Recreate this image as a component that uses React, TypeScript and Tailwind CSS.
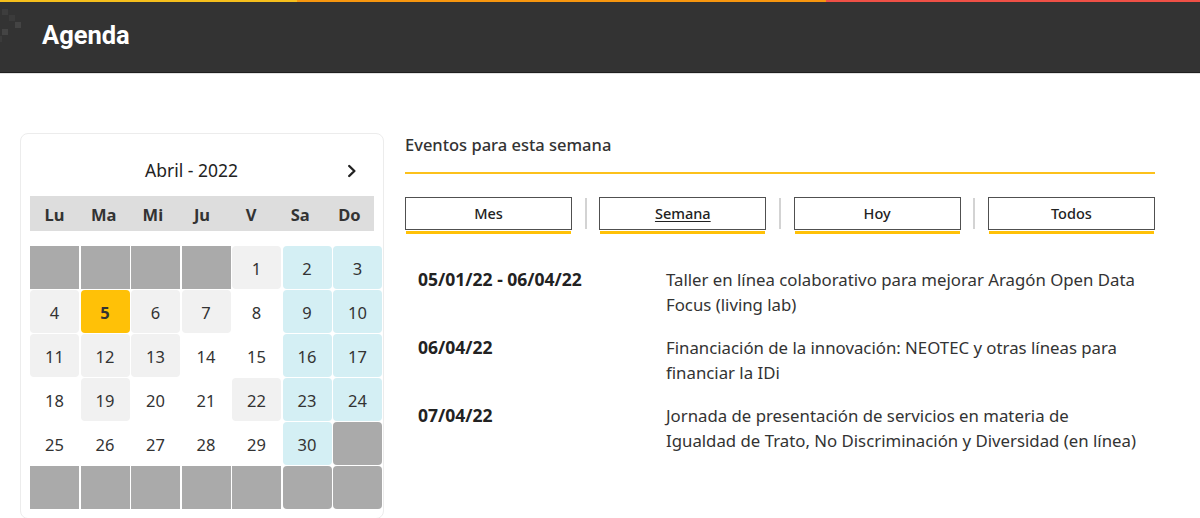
import React from "react";

type Cell = { d?: number; t: "g" | "gr" | "lg" | "b" | "y" | "w" };

const rows: Cell[][] = [
  [{ t: "g" }, { t: "g" }, { t: "g" }, { t: "g" }, { d: 1, t: "lg" }, { d: 2, t: "b" }, { d: 3, t: "b" }],
  [{ d: 4, t: "lg" }, { d: 5, t: "y" }, { d: 6, t: "lg" }, { d: 7, t: "lg" }, { d: 8, t: "w" }, { d: 9, t: "b" }, { d: 10, t: "b" }],
  [{ d: 11, t: "lg" }, { d: 12, t: "lg" }, { d: 13, t: "lg" }, { d: 14, t: "w" }, { d: 15, t: "w" }, { d: 16, t: "b" }, { d: 17, t: "b" }],
  [{ d: 18, t: "w" }, { d: 19, t: "lg" }, { d: 20, t: "w" }, { d: 21, t: "w" }, { d: 22, t: "lg" }, { d: 23, t: "b" }, { d: 24, t: "b" }],
  [{ d: 25, t: "w" }, { d: 26, t: "w" }, { d: 27, t: "w" }, { d: 28, t: "w" }, { d: 29, t: "w" }, { d: 30, t: "b" }, { t: "gr" }],
  [{ t: "g" }, { t: "g" }, { t: "g" }, { t: "g" }, { t: "g" }, { t: "gr" }, { t: "gr" }],
];

const cellClass: Record<Cell["t"], string> = {
  g: "bg-[#aaaaaa]",
  gr: "bg-[#aaaaaa] rounded-[4px]",
  lg: "bg-[#f1f1f1] rounded-[4px]",
  b: "bg-[#d4eff4] rounded-[4px]",
  y: "bg-[#ffc107] rounded-[4px] font-bold text-[#111]",
  w: "bg-white",
};

const days = ["Lu", "Ma", "Mi", "Ju", "V", "Sa", "Do"];

const events = [
  {
    date: "05/01/22 - 06/04/22",
    lines: ["Taller en línea colaborativo para mejorar Aragón Open Data", "Focus (living lab)"],
  },
  {
    date: "06/04/22",
    lines: ["Financiación de la innovación: NEOTEC y otras líneas para", "financiar la IDi"],
  },
  {
    date: "07/04/22",
    lines: [
      "Jornada de presentación de servicios en materia de",
      "Igualdad de Trato, No Discriminación y Diversidad (en línea)",
    ],
  },
];

const buttons = ["Mes", "Semana", "Hoy", "Todos"];

export default function App() {
  return (
    <div className="w-[1200px] h-[518px] overflow-hidden bg-white font-['Noto_Sans',sans-serif] text-[#333]">
      {/* top stripe */}
      <div className="flex h-[2px]">
        <div className="w-[297px] bg-[#f6bf1c]" />
        <div className="w-[529px] bg-[#f7960f]" />
        <div className="flex-1 bg-[#ef5046]" />
      </div>
      {/* header */}
      <div className="relative h-[71px] bg-[#333333] border-b border-[#1f1f1f]">
        <svg className="absolute left-0 top-[-2px]" width="24" height="44" viewBox="0 0 24 44">
          <rect x="2" y="9" width="6" height="6" fill="#3d3d3d" />
          <rect x="9" y="15" width="6" height="6" fill="#3b3b3b" />
          <rect x="15" y="22" width="6" height="6" fill="#444444" />
          <rect x="2" y="29" width="6" height="6" fill="#444444" />
          <rect x="0" y="36" width="2" height="6" fill="#3b3b3b" />
        </svg>
        <div className="pl-[42px] pt-[21px] font-['Roboto',sans-serif] font-bold text-[25.5px] leading-[25px] text-white">
          Agenda
        </div>
      </div>
      <div className="h-[1px] bg-[#e2e2e2]" />

      {/* main */}
      <div className="flex mt-[59px] pl-[20px]">
        {/* calendar card */}
        <div className="w-[364px] h-[386px] border border-[#ececec] rounded-[8px] pl-[9px] shrink-0">
          <div className="flex items-center mt-[24px] h-[24px]">
            <div className="w-[317px] pl-[6px] text-center text-[17.5px] leading-[24px] text-[#222]">
              Abril - 2022
            </div>
            <svg width="10" height="14" viewBox="0 0 10 14" className="mt-[1px]">
              <path d="M2.2 2 L7.4 7 L2.2 12" fill="none" stroke="#222" strokeWidth="2.4" strokeLinecap="round" strokeLinejoin="round" />
            </svg>
          </div>
          <div className="mt-[14px] w-[344px] h-[35px] bg-[#dddddd] grid grid-cols-7">
            {days.map((d) => (
              <div key={d} className="flex items-center justify-center pt-[2px] font-bold text-[16.5px] leading-[24px] text-[#333]">
                {d}
              </div>
            ))}
          </div>
          <div className="mt-[15px] w-[352px] grid grid-cols-7 gap-x-[1.5px] gap-y-[1px]">
            {rows.flat().map((c, i) => (
              <div
                key={i}
                className={`h-[43px] flex items-center justify-center pt-[2px] text-[16.5px] leading-[24px] text-[#333] ${cellClass[c.t]}`}
              >
                {c.d ?? ""}
              </div>
            ))}
          </div>
        </div>

        {/* events */}
        <div className="ml-[21px] w-[750px]">
          <div className="pb-[15px] border-b-2 border-[#fcc11b] text-[16.5px] leading-[24px] font-medium text-[#333]">
            Eventos para esta semana
          </div>
          <div className="mt-[23px] flex justify-between items-start">
            {buttons.map((b, i) => (
              <React.Fragment key={b}>
                {i > 0 && <div className="w-[2px] h-[31px] mt-[1px] bg-[#d3d3d3]" />}
                <div className="w-[167px]">
                  <div className="h-[33px] border border-[#505050] bg-white flex items-center justify-center text-[14.5px] font-medium text-[#222]">
                    <span className={b === "Semana" ? "underline underline-offset-2" : ""}>{b}</span>
                  </div>
                  <div className="mt-[1px] ml-[1px] mr-[1px] h-[3px] bg-[#ffc107]" />
                </div>
              </React.Fragment>
            ))}
          </div>
          <div className="mt-[33px] flex flex-col gap-[18px]">
            {events.map((e) => (
              <div key={e.date} className="flex">
                <div className="w-[261px] pl-[13px] font-bold text-[17.5px] leading-[25px] text-[#222] whitespace-nowrap">
                  {e.date}
                </div>
                <div className="text-[16.8px] leading-[25px] text-[#333] whitespace-nowrap">
                  {e.lines.map((l) => (
                    <div key={l}>{l}</div>
                  ))}
                </div>
              </div>
            ))}
          </div>
        </div>
      </div>
    </div>
  );
}
